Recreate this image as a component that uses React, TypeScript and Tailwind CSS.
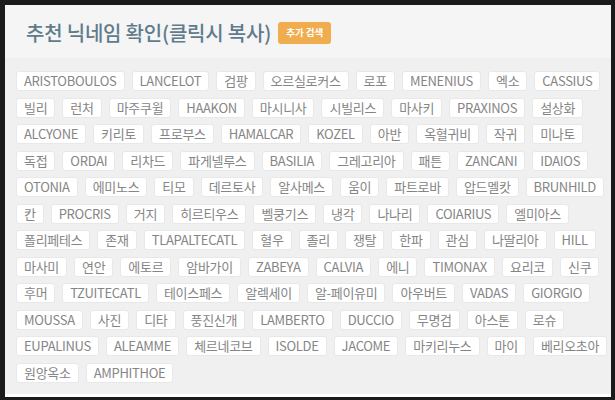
const rows: string[][] = [
  ['ARISTOBOULOS', 'LANCELOT', '검팡', '오르실로커스', '로포', 'MENENIUS', '엑소', 'CASSIUS'],
  ['빌리', '런처', '마주쿠윌', 'HAAKON', '마시니사', '시빌리스', '마사키', 'PRAXINOS', '설상화'],
  ['ALCYONE', '키리토', '프로부스', 'HAMALCAR', 'KOZEL', '아반', '옥혈귀비', '작귀', '미나토'],
  ['독접', 'ORDAI', '리차드', '파게넬루스', 'BASILIA', '그레고리아', '패튼', 'ZANCANI', 'IDAIOS'],
  ['OTONIA', '에미노스', '티모', '데르토사', '알사메스', '움이', '파트로바', '압드멜캇', 'BRUNHILD'],
  ['칸', 'PROCRIS', '거지', '히르티우스', '벨쿵기스', '냉각', '나나리', 'COIARIUS', '엘미아스'],
  ['폴리페테스', '존재', 'TLAPALTECATL', '혈우', '졸리', '쟁탈', '한파', '관심', '나딸리아', 'HILL'],
  ['마사미', '연안', '에토르', '암바가이', 'ZABEYA', 'CALVIA', '에니', 'TIMONAX', '요리코', '신쿠'],
  ['후머', 'TZUITECATL', '테이스페스', '알렉세이', '알-페이유미', '아우버트', 'VADAS', 'GIORGIO'],
  ['MOUSSA', '사진', '디타', '풍진신개', 'LAMBERTO', 'DUCCIO', '무명검', '아스톤', '로슈'],
  ['EUPALINUS', 'ALEAMME', '체르네코브', 'ISOLDE', 'JACOME', '마키리누스', '마이', '베리오초아'],
  ['원앙옥소', 'AMPHITHOE'],
];

function Tag({ name }: { name: string }) {
  return (
    <button
      type="button"
      className="h-[20px] px-[7px] bg-white border border-[#e8e8e8] rounded-[3px] text-[13px] leading-[18px] tracking-[-0.3px] text-[#858585] whitespace-nowrap"
    >
      {name}
    </button>
  );
}

export default function App() {
  return (
    <div
      className="w-[615px] h-[400px] bg-[#1b1b1b] pt-[5px] pl-[5px] overflow-hidden"
      style={{ fontFamily: '"Noto Sans CJK KR", "Noto Sans", sans-serif' }}
    >
      <div className="w-[606px] h-[392px] bg-white flex flex-col">
        <div className="h-[53px] bg-[#f5f5f5] flex items-center gap-[7px] pl-[21px] pt-[2px]">
          <h1 className="text-[20px] font-medium text-[#5f7b8c] tracking-[-0.2px]">추천 닉네임 확인(클릭시 복사)</h1>
          <span className="h-[22px] px-[8px] flex items-center rounded-[3px] bg-[#f0ad4e] text-white text-[9.5px] font-bold">
            추가 검색
          </span>
        </div>
        <div className="flex-1 bg-[#f0f0f0] mb-[3px] pl-[11px] pt-[13px] flex flex-col gap-[6.5px]">
          {rows.map((row, i) => (
            <div key={i} className="flex gap-[7px]">
              {row.map((name) => (
                <Tag key={name} name={name} />
              ))}
            </div>
          ))}
        </div>
      </div>
    </div>
  );
}
